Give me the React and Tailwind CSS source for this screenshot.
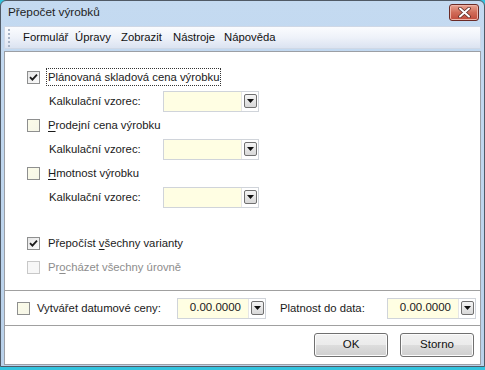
import React from 'react';

const font = { fontFamily: '"Liberation Sans", Arial, sans-serif' };

const Check = ({ checked, disabled, cream }) => (
  <span
    className={`flex h-[13px] w-[13px] shrink-0 items-center justify-center border ${
      disabled ? 'border-[#c8c8c8] bg-[#f7f7f7]' : 'border-[#8e8f8f]'
    } ${!disabled && cream ? 'bg-gradient-to-br from-[#fbfbe8] to-[#f6f6e8]' : ''} ${
      !disabled && !cream ? 'bg-gradient-to-br from-[#e6e6e6] to-[#fbfbfb]' : ''
    }`}
  >
    {checked && (
      <svg width="9" height="9" viewBox="0 0 9 9">
        <path d="M1 4.2 L3.4 6.6 L8 1.6" fill="none" stroke="#1b1b1b" strokeWidth="1.8" />
      </svg>
    )}
  </span>
);

const DropBtn = () => (
  <span className="flex h-[14px] w-[13px] items-center justify-center rounded-[2px] border border-[#707070] bg-gradient-to-b from-[#f4f4f4] to-[#d8d8d8]">
    <svg width="7" height="4" viewBox="0 0 7 4">
      <path d="M0 0 H7 L3.5 4 Z" fill="#111" />
    </svg>
  </span>
);

const Combo = ({ value, width }) => (
  <div className={`flex h-[21px] shrink-0 ${width} border border-[#d0d4da] bg-white`}>
    <div className="flex flex-1 items-center justify-end bg-[#fffee3] pr-[7px] text-[11.5px] text-[#1a1a1a]">
      {value}
    </div>
    <div className="flex w-[17px] items-center justify-center border-l border-[#e6e6e6]">
      <DropBtn />
    </div>
  </div>
);

const Row = ({ checked, disabled, cream, children, focus }) => (
  <div className="flex h-[24px] items-center pl-[22px]">
    <Check checked={checked} disabled={disabled} cream={cream} />
    <span
      className={`ml-[7px] px-[1px] text-[11.3px] leading-[16px] ${
        disabled ? 'text-[#8d8d8d]' : 'text-[#1a1a1a]'
      } ${focus ? 'outline outline-1 outline-dotted outline-[#333]' : ''}`}
    >
      {children}
    </span>
  </div>
);

const Formula = () => (
  <div className="flex h-[24px] items-center pl-[44px]">
    <span className="w-[114px] text-[11.3px] text-[#1a1a1a]">Kalkulační vzorec:</span>
    <Combo value="" width="w-[96px]" />
  </div>
);

const Button = ({ children }) => (
  <button className="flex h-[24px] w-[74px] items-center justify-center rounded-[3px] border border-[#707070] bg-[linear-gradient(#f2f2f2_0%,#ebebeb_50%,#dddddd_51%,#cfcfcf_100%)] text-[11.5px] text-[#111] shadow-[inset_0_0_0_1px_#fcfcfc]">
    {children}
  </button>
);

const menu = [
  ['Formulář', 'w-[52px]'],
  ['Úpravy', 'w-[46px]'],
  ['Zobrazit', 'w-[52px]'],
  ['Nástroje', 'w-[51px]'],
  ['Nápověda', 'w-[60px]'],
];

export default function App() {
  return (
    <div className="h-[370px] w-[485px] bg-[#33c3de]" style={font}>
      <div className="flex h-[367px] flex-col rounded-t-[6px] border border-[#505a66] bg-gradient-to-b from-[#c4daf1] to-[#b9d1ea] px-[3px] pb-[1px]">
        {/* title bar */}
        <div className="flex h-[25px] items-center justify-between">
          <span className="ml-[4px] mt-[-2px] text-[11.8px] text-[#1e1e1e]">Přepočet výrobků</span>
          <span className="mr-[2px] mt-[-3px] flex h-[17px] w-[30px] items-center justify-center rounded-[3px] border border-[#6b2b26] bg-gradient-to-b from-[#e8a493] via-[#d06b58] to-[#c04a3a] shadow-[inset_0_0_0_1px_#eeb4a8]">
            <svg width="13" height="11" viewBox="0 0 13 11">
              <path d="M2 1.5 L11 9.5 M11 1.5 L2 9.5" stroke="#5a2a24" strokeWidth="3.6" strokeLinecap="round" />
              <path d="M2 1.5 L11 9.5 M11 1.5 L2 9.5" stroke="#fff" strokeWidth="2" strokeLinecap="round" />
            </svg>
          </span>
        </div>
        {/* menu bar */}
        <div className="flex h-[23px] items-center border border-[#cfd8e6] bg-gradient-to-b from-[#fbfcfe] via-[#eef2f9] to-[#dbe3f1]">
          <span className="ml-[3px] flex flex-col gap-[2px]">
            {[0, 1, 2, 3, 4].map((i) => (
              <span key={i} className="h-[2px] w-[2px] bg-[#a8b4c6]" />
            ))}
          </span>
          <div className="ml-[13px] flex text-[11.3px] text-[#111]">
            {menu.map(([label, w]) => (
              <span key={label} className={w}>{label}</span>
            ))}
          </div>
        </div>
        {/* client */}
        <div className="mt-[2px] flex flex-1 flex-col border border-[#9c9fa5] bg-white">
          <div className="flex h-[238px] flex-col pt-[13px]">
            <Row checked focus>Plánovaná skladová cena výrobku</Row>
            <Formula />
            <Row cream>
              <span className="underline underline-offset-2">P</span>rodejní cena výrobku
            </Row>
            <Formula />
            <Row cream>
              <span className="underline underline-offset-2">H</span>motnost výrobku
            </Row>
            <Formula />
            <div className="h-[22px]" />
            <Row checked>
              Přepočíst <span className="underline underline-offset-2">v</span>šechny varianty
            </Row>
            <Row disabled>
              Pr<span className="underline underline-offset-2">o</span>cházet všechny úrovně
            </Row>
          </div>
          <div className="flex h-[35px] items-center border-t border-[#a0a0a0] pl-[12px]">
            <Check cream />
            <span className="ml-[7px] w-[140px] text-[11.3px] text-[#1a1a1a]">Vytvářet datumové ceny:</span>
            <Combo value="0.00.0000" width="w-[89px]" />
            <span className="ml-[14px] w-[107px] text-[11.3px] text-[#1a1a1a]">Platnost do data:</span>
            <Combo value="0.00.0000" width="w-[89px]" />
          </div>
          <div className="flex flex-1 items-start justify-end gap-[12px] border-t border-[#a0a0a0] pr-[6px] pt-[7px]">
            <Button>OK</Button>
            <Button>Storno</Button>
          </div>
        </div>
      </div>
    </div>
  );
}
